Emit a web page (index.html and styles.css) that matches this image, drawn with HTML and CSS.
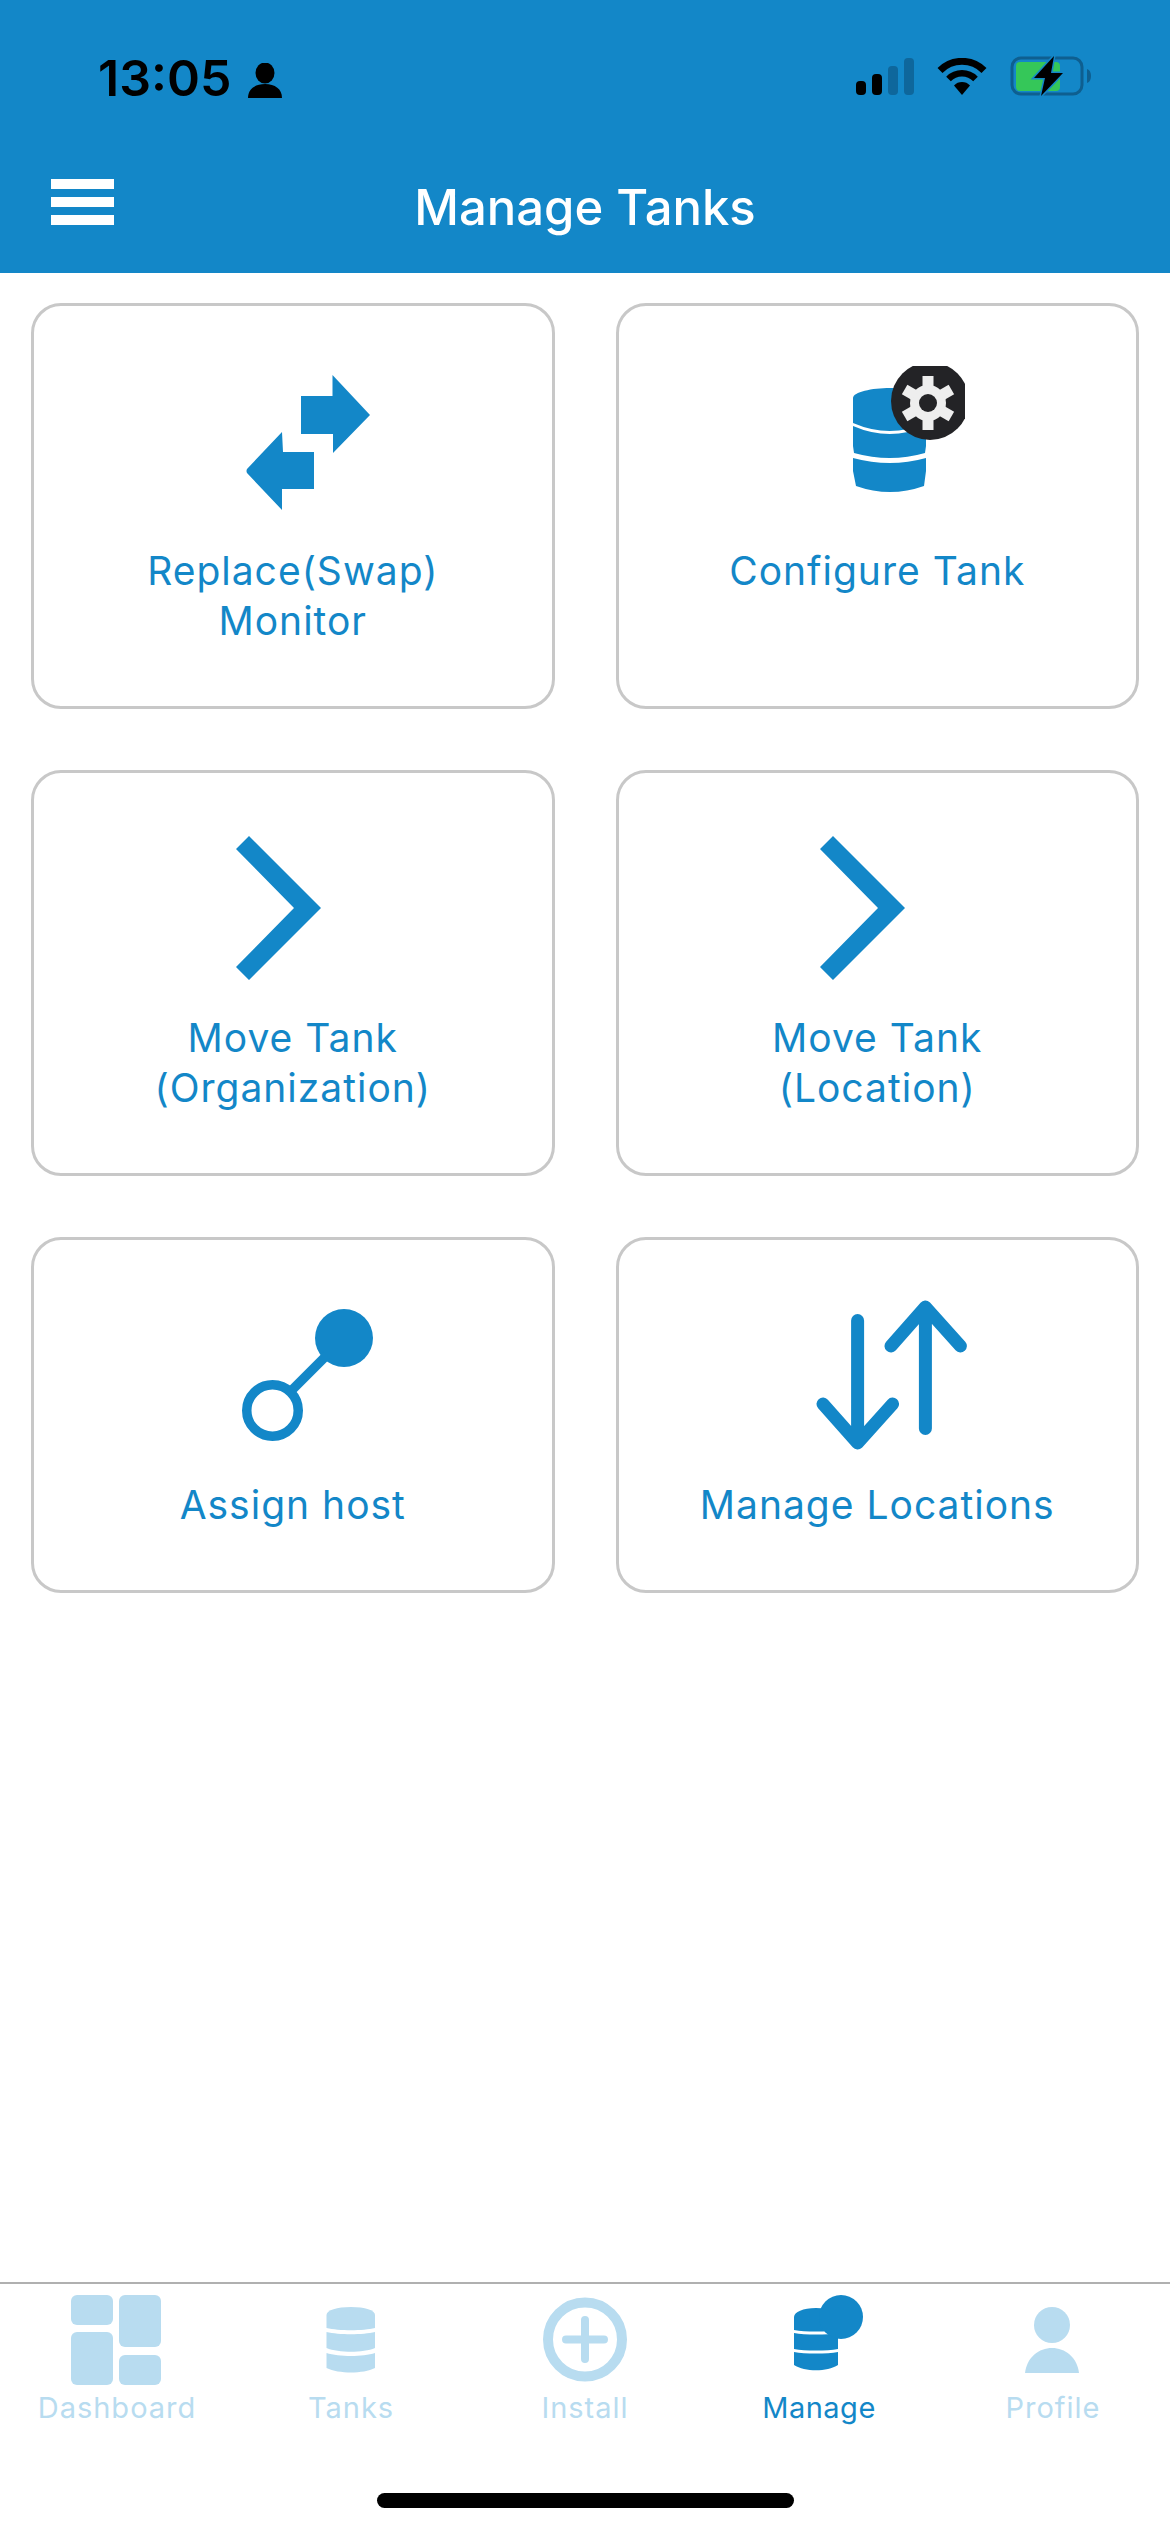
FILE: index.html
```html
<!DOCTYPE html>
<html>
<head>
	<title>Manage Tanks</title>
	<link rel="stylesheet" href="styles.css">
</head>
<body>
	<div class="page">
		<header class="header">
			<div class="status-bar">
				<div class="status-left">
					<span class="time">13:05</span>
					<svg class="person" viewBox="0 0 34 35" width="34" height="35">
						<ellipse cx="17" cy="10" rx="9.5" ry="10.5"/>
						<path d="M0 35C0 26 7 21 17 21S34 26 34 35Z"/>
					</svg>
				</div>
				<div class="status-right">
					<svg viewBox="0 0 58 37" width="58" height="37">
						<rect x="0" y="23" width="10" height="14" rx="4"/>
						<rect x="16" y="16" width="10" height="21" rx="4"/>
						<rect class="dim" x="32" y="8" width="10" height="29" rx="4"/>
						<rect class="dim" x="48" y="0" width="10" height="37" rx="4"/>
					</svg>
					<svg viewBox="0 0 50 37" width="50" height="37">
						<path class="wifi-arc" d="M3 12.500A31 31 0 0 1 47 12.500" stroke-width="7"/>
						<path class="wifi-arc" d="M11.500 21A19 19 0 0 1 38.500 21" stroke-width="6.500"/>
						<path d="M25 37L17 27.500A11 11 0 0 1 33 27.500Z"/>
					</svg>
					<svg class="battery" viewBox="0 0 82 42" width="82" height="42">
						<rect class="battery-case" x="2" y="3" width="70" height="36" rx="9"/>
						<path class="battery-case-nub" d="M77 14C80 15 81 18 81 21S80 27 77 28Z"/>
						<rect class="battery-fill" x="6" y="7" width="44" height="29" rx="4"/>
						<path class="battery-bolt" d="M44 1L24 23H35L31 41L53 18H41Z"/>
					</svg>
				</div>
			</div>
			<div class="nav-bar">
				<div class="menu-btn"><span></span><span></span><span></span></div>
				<h1 class="title">Manage Tanks</h1>
			</div>
		</header>

		<main class="grid">
			<a class="card">
				<svg class="card-icon" viewBox="0 0 180 150">
					<path d="M98 30H129.500V9L167 49L130 87V68H98Z"/>
					<path d="M79 66L44 103Q43 105 44 107L79 144V123H111V86H80Z"/>
				</svg>
				<span class="card-label">Replace(Swap)<br>Monitor</span>
			</a>
			<a class="card">
				<svg class="card-icon" viewBox="0 0 180 150">
					<defs>
						<clipPath id="badge-clip"><rect x="100" y="0" width="78" height="80"/></clipPath>
					</defs>
					<path d="M66 32C66 26 85 22 103 22S139 26 139 32V57Q103 73 66 57Z"/>
					<path d="M66 60Q103 76 139 60V80L138 87Q103 97 67 87L66 80Z"/>
					<path d="M66 92Q103 102 139 92V105L137 120Q103 132 69 120L66 105Z"/>
					<circle class="badge" cx="143" cy="35" r="39" clip-path="url(#badge-clip)"/>
					<g class="gear">
						<circle cx="141" cy="37" r="18"/>
						<rect x="135.500" y="10" width="11" height="12"/>
						<rect x="135.500" y="52" width="11" height="12"/>
						<rect x="135.500" y="10" width="11" height="12" transform="rotate(60 141 37)"/>
						<rect x="135.500" y="10" width="11" height="12" transform="rotate(120 141 37)"/>
						<rect x="135.500" y="10" width="11" height="12" transform="rotate(240 141 37)"/>
						<rect x="135.500" y="10" width="11" height="12" transform="rotate(300 141 37)"/>
					</g>
					<circle class="badge" cx="141" cy="37" r="9"/>
				</svg>
				<span class="card-label">Configure Tank</span>
			</a>
			<a class="card">
				<svg class="card-icon" viewBox="0 0 180 150">
					<path d="M46 3L118 75L46 147L33 134L91 75L33 16Z"/>
				</svg>
				<span class="card-label">Move Tank<br>(Organization)</span>
			</a>
			<a class="card">
				<svg class="card-icon" viewBox="0 0 180 150">
					<path d="M46 3L118 75L46 147L33 134L91 75L33 16Z"/>
				</svg>
				<span class="card-label">Move Tank<br>(Location)</span>
			</a>
			<a class="card">
				<svg class="card-icon" viewBox="0 0 180 150">
					<circle cx="141" cy="38" r="29"/>
					<circle class="ring" cx="69.500" cy="110.500" r="25.750"/>
					<line class="ring" x1="88" y1="91" x2="124" y2="55"/>
				</svg>
				<span class="card-label">Assign host</span>
			</a>
			<a class="card">
				<svg class="card-icon" viewBox="0 0 180 150">
					<path class="arrow" d="M70.600 20.500V138M36 104L70.600 143L105.600 104"/>
					<path class="arrow" d="M138.400 128.500V12M104 46L138.400 7L173.400 46"/>
				</svg>
				<span class="card-label">Manage Locations</span>
			</a>
		</main>

		<footer class="tab-bar">
			<nav class="tabs">
				<div class="tab">
					<svg class="tab-icon" viewBox="0 0 100 90">
						<rect x="4" y="0" width="42" height="30" rx="6"/>
						<rect x="52" y="0" width="42" height="52" rx="6"/>
						<rect x="4" y="37" width="42" height="53" rx="6"/>
						<rect x="52" y="60" width="42" height="30" rx="6"/>
					</svg>
					<span class="tab-label">Dashboard</span>
				</div>
				<div class="tab">
					<svg class="tab-icon" viewBox="0 0 100 90">
						<path d="M25.500 20C25.500 15 36 12 50 12S74 15 74 20V33C62 36 38 36 25.500 33Z"/>
						<path d="M25.500 37C38 40 62 40 74 37V53C62 58 38 58 25.500 53Z"/>
						<path d="M25.500 58C38 62 62 62 74 58V73C62 79 38 79 25.500 73Z"/>
					</svg>
					<span class="tab-label">Tanks</span>
				</div>
				<div class="tab">
					<svg class="tab-icon" viewBox="0 0 100 90">
						<circle class="tab-ring" cx="50" cy="44.500" r="37"/>
						<path class="tab-plus" d="M31 44.500H69M50 25V64"/>
					</svg>
					<span class="tab-label">Install</span>
				</div>
				<div class="tab tab-active">
					<svg class="tab-icon" viewBox="0 0 100 90">
						<path d="M25 22C25 17 34 13 47 13S69 17 69 22V35C58 37 36 37 25 35Z"/>
						<path d="M25 38C36 40 58 40 69 38V54C58 56 36 56 25 54Z"/>
						<path d="M25 57C36 59 58 59 69 57V70C58 77 36 77 25 70Z"/>
						<circle cx="72" cy="22" r="22"/>
					</svg>
					<span class="tab-label">Manage</span>
				</div>
				<div class="tab">
					<svg class="tab-icon" viewBox="0 0 100 90">
						<ellipse cx="49" cy="30" rx="18" ry="18"/>
						<path d="M22 78C24 62 36 53 49 53S74 62 76 78Z"/>
					</svg>
					<span class="tab-label">Profile</span>
				</div>
			</nav>
			<div class="home-indicator"></div>
		</footer>
	</div>
</body>
</html>
```
FILE: styles.css
```css
* {
	box-sizing: border-box;
}
body {
	margin: 0;
	background-color: #fff;
	font-family: Inter, Roboto, sans-serif;
}
.page {
	display: flex;
	flex-direction: column;
	height: 2532px;
}

/* Top header */
.header {
	height: 273px;
	background-color: #1387c8;
}
.status-bar {
	display: flex;
	justify-content: space-between;
	align-items: flex-start;
	height: 170px;
	padding: 56px 78px 0 98px;
}
.status-left {
	display: flex;
	align-items: center;
	gap: 17px;
}
.time {
	font-size: 50px;
	font-weight: 600;
	line-height: 44px;
	color: #000;
}
.person {
	margin-top: 4px;
}
.status-right {
	display: flex;
	gap: 23px;
	margin-top: 2px;
}
.status-right svg {
	fill: #000;
}
.status-right .dim {
	fill: #0e679c;
}
.status-right .wifi-arc {
	fill: none;
	stroke: #000;
}
.status-right .battery {
	margin-top: -3px;
}
.status-right .battery-case {
	fill: none;
	stroke: #0e5f90;
	stroke-width: 3;
}
.status-right .battery-case-nub {
	fill: #0e5f90;
}
.status-right .battery-fill {
	fill: #35c759;
}
.status-right .battery-bolt {
	fill: #000;
	stroke: #1387c8;
	stroke-width: 3;
	paint-order: stroke;
}
.nav-bar {
	display: flex;
	align-items: center;
	height: 64px;
	padding-left: 51px;
}
.menu-btn {
	display: flex;
	flex-direction: column;
	gap: 8px;
	width: 63px;
}
.menu-btn span {
	height: 10px;
	background-color: #fff;
}
.title {
	flex: 1;
	margin: 12px 114px 0 0;
	font-size: 49px;
	font-weight: 500;
	line-height: 64px;
	text-align: center;
	color: #fff;
}

/* Card grid */
.grid {
	flex: 1;
	display: grid;
	grid-template-columns: 1fr 1fr;
	gap: 61px;
	align-content: start;
	padding: 30px 31px 0;
}
.card {
	display: flex;
	flex-direction: column;
	align-items: center;
	padding: 60px 0;
	border: 3px solid #c8c8c8;
	border-radius: 30px;
}
.card-icon {
	width: 180px;
	height: 150px;
	fill: #1387c8;
}
.card-icon .badge {
	fill: #232326;
}
.card-icon .gear {
	fill: #eee;
}
.card-icon .ring {
	fill: none;
	stroke: #1387c8;
	stroke-width: 9.500;
}
.card-icon .arrow {
	fill: none;
	stroke: #1387c8;
	stroke-width: 13;
	stroke-linecap: round;
	stroke-linejoin: round;
}
.card-label {
	margin-top: 30px;
	font-size: 39px;
	letter-spacing: 1px;
	line-height: 50px;
	text-align: center;
	color: #1387c8;
}

/* Bottom tabs */
.tab-bar {
	height: 250px;
	border-top: 2px solid #b0b0b0;
}
.tabs {
	display: flex;
	padding-top: 11px;
}
.tab {
	flex: 1;
	display: flex;
	flex-direction: column;
	align-items: center;
}
.tab-icon {
	width: 100px;
	height: 90px;
	fill: #b8dcf0;
	filter: blur(0.7px);
}
.tab-icon .tab-ring {
	fill: none;
	stroke: #b8dcf0;
	stroke-width: 10;
}
.tab-icon .tab-plus {
	fill: none;
	stroke: #b8dcf0;
	stroke-width: 8;
	stroke-linecap: round;
}
.tab-label {
	margin-top: 5px;
	font-size: 29px;
	letter-spacing: 1px;
	line-height: 36px;
	color: #b8dcf0;
}
.tab-active .tab-icon {
	fill: #1387c8;
}
.tab-active .tab-label {
	color: #1387c8;
	letter-spacing: 0.5px;
}
.home-indicator {
	width: 417px;
	height: 15px;
	margin: 67px auto 0;
	border-radius: 8px;
	background-color: #000;
}
```
